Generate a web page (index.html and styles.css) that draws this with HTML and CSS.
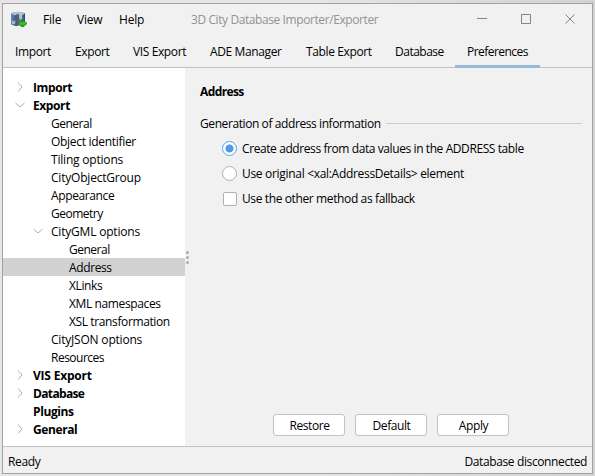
FILE: index.html
```html
<!DOCTYPE html>
<html lang="en">
<head>
<meta charset="utf-8">
<title>3D City Database Importer/Exporter</title>
<link rel="stylesheet" href="styles.css">
</head>
<body>
<div class="window">
  <header class="titlebar">
    <svg class="app-icon" width="17" height="17" viewBox="0 0 17 17">
      <defs><linearGradient id="drum"><stop offset="0" stop-color="#6f89ae"/><stop offset=".25" stop-color="#4a6a96"/><stop offset=".55" stop-color="#9fb0c8"/><stop offset="1" stop-color="#1d4476"/></linearGradient></defs>
      <path d="M0 2.200Q7-.8 14 2.200V13.500Q7 16.500 0 13.500Z" fill="url(#drum)"/>
      <ellipse cx="7" cy="2.500" rx="6.500" ry="1.700" fill="#b3c0d2"/>
      <path d="M4 5l2-2h2v4l1 3-2 5H4l1-5-1-2z" fill="#4b5563" opacity=".85"/>
      <path d="M8 3h3v5H9zM1 10h3v3H1z" fill="#c3ccda" opacity=".8"/>
      <path d="M7.500 12.500L11 9v2h1V9l4 3.500L12 16v-2h-1v2z" fill="#35c51f" stroke="#16850f" stroke-width=".9"/>
    </svg>
    <nav class="menu"><span class="m-file">File</span><span class="m-view">View</span><span class="m-help">Help</span></nav>
    <h1 class="title">3D City Database Importer/Exporter</h1>
    <svg class="controls" width="98" height="11" viewBox="0 0 98 11" fill="none" stroke="#858585">
      <path d="M0 4.500h10M44.500.5h9v9h-9zM88.500.5l9 9M97.500.5l-9 9"/>
    </svg>
  </header>
  <nav class="tabs">
    <span class="tab t-import">Import</span>
    <span class="tab t-export">Export</span>
    <span class="tab t-vis">VIS Export</span>
    <span class="tab t-ade">ADE Manager</span>
    <span class="tab t-table">Table Export</span>
    <span class="tab t-db">Database</span>
    <span class="tab t-pref active">Preferences</span>
  </nav>
  <main class="content">
    <ul class="tree">
      <li class="top"><svg class="arrow" viewBox="0 0 10 10"><path d="M3 .5L7 5L3 9.500"/></svg><span>Import</span></li>
      <li class="top"><svg class="arrow" viewBox="0 0 10 10"><path d="M.5 3L5 7L9.500 3"/></svg><span>Export</span></li>
      <li class="sub tight"><span>General</span></li>
      <li class="sub mid"><span>Object identifier</span></li>
      <li class="sub loose"><span>Tiling options</span></li>
      <li class="sub loose"><span>CityObjectGroup</span></li>
      <li class="sub"><span>Appearance</span></li>
      <li class="sub tight"><span>Geometry</span></li>
      <li class="sub loose"><svg class="arrow" viewBox="0 0 10 10"><path d="M.5 3L5 7L9.500 3"/></svg><span>CityGML options</span></li>
      <li class="leaf tight"><span>General</span></li>
      <li class="leaf selected"><span>Address</span></li>
      <li class="leaf"><span>XLinks</span></li>
      <li class="leaf"><span>XML namespaces</span></li>
      <li class="leaf"><span>XSL transformation</span></li>
      <li class="sub loose"><span>CityJSON options</span></li>
      <li class="sub tight"><span>Resources</span></li>
      <li class="top wide"><svg class="arrow" viewBox="0 0 10 10"><path d="M3 .5L7 5L3 9.500"/></svg><span>VIS Export</span></li>
      <li class="top narrow"><svg class="arrow" viewBox="0 0 10 10"><path d="M3 .5L7 5L3 9.500"/></svg><span>Database</span></li>
      <li class="top"><span>Plugins</span></li>
      <li class="top"><svg class="arrow" viewBox="0 0 10 10"><path d="M3 .5L7 5L3 9.500"/></svg><span>General</span></li>
    </ul>
    <div class="divider"><i></i><i></i><i></i></div>
    <section class="panel">
      <h2>Address</h2>
      <div class="group"><span>Generation of address information</span></div>
      <div class="option"><span class="radio checked"></span><span class="o-create">Create address from data values in the ADDRESS table</span></div>
      <div class="option"><span class="radio"></span><span class="o-orig">Use original &lt;xal:AddressDetails&gt; element</span></div>
      <div class="option"><span class="check"></span><span>Use the other method as fallback</span></div>
      <div class="buttons"><button>Restore</button><button>Default</button><button>Apply</button></div>
    </section>
  </main>
  <footer class="status"><span>Ready</span><span>Database disconnected</span></footer>
</div>
</body>
</html>
```
FILE: styles.css
```css
* { box-sizing: border-box; margin: 0; padding: 0; }
body {
  width: 595px; height: 476px; overflow: hidden;
  padding: 3px 2px 2px 2px;
  background: linear-gradient(90deg, #e6e6e6 0, #e6e6e6 300px, #d2d2d2 595px);
  font: 12px/18px "Open Sans", "Noto Sans", sans-serif;
  letter-spacing: -0.38px; color: #000; white-space: nowrap;
}
.window {
  width: 591px; height: 471px; display: flex; flex-direction: column;
  background: #f1f1f1; border: 1px solid #a2a2a2;
}
.titlebar { height: 32px; display: flex; align-items: center; padding-left: 8px; }
.app-icon { flex: none; margin-top: -1px; }
.menu { display: flex; width: 147px; padding-left: 15px; letter-spacing: -0.2px; }
.m-file { width: 34px; }
.m-view { width: 42px; }
.title { flex: 1; font-size: 12px; font-weight: 400; color: #929292; padding-left: 16px; letter-spacing: -0.41px; }
.controls { flex: none; margin-right: 17px; margin-top: -1px; }
.tabs { height: 32px; display: flex; border-bottom: 1px solid #c2c2c2; }
.tab { height: 32px; line-height: 32px; padding-left: 12px; }
.t-import { width: 60px; }
.t-export { width: 58px; }
.t-vis { width: 77px; }
.t-ade { width: 96px; }
.t-table { width: 89px; }
.t-db { width: 72px; letter-spacing: -0.5px; }
.t-pref { width: 85px; letter-spacing: -0.55px; }
.active { border-bottom: 3px solid #98b9dc; }
.content { height: 378px; display: flex; }
.tree { width: 182px; padding-top: 10px; background: #fff; list-style: none; }
.tree li { height: 18px; display: flex; align-items: center; }
.tree span { padding-top: 2px; }
.top { padding-left: 30px; font-weight: 700; letter-spacing: -0.4px; }
.sub { padding-left: 48px; }
.leaf { padding-left: 66px; }
.tree .tight { letter-spacing: -0.5px; }
.tree .mid { letter-spacing: -0.3px; }
.tree .loose { letter-spacing: -0.2px; }
.tree .wide { letter-spacing: -0.2px; }
.tree .narrow { letter-spacing: -0.65px; }
.selected { background: #d2d2d2; }
.arrow { width: 10px; height: 10px; margin-left: -18px; margin-right: 8px; fill: none; stroke: #aeaeae; }
.divider { width: 5px; display: flex; flex-direction: column; align-items: center; justify-content: center; gap: 2px; }
.divider i { width: 3px; height: 3px; border-radius: 50%; background: #adadad; }
.panel { flex: 1; padding: 15px 10px 0 10px; }
h2 { font-size: 12px; line-height: 18px; letter-spacing: -0.6px; }
.group { display: flex; align-items: center; gap: 5px; margin: 14px 0 3px; letter-spacing: -0.41px; }
.group::after { content: ""; flex: 1; height: 1px; margin-top: -1px; background: #cdcdcd; }
.option { height: 25px; display: flex; align-items: center; gap: 5px; padding-left: 22px; }
.o-create { letter-spacing: -0.41px; }
.o-orig { letter-spacing: -0.31px; }
.radio { width: 15px; height: 15px; border: 1px solid #b0b0b0; border-radius: 50%; background: #fff; }
.checked { border-color: #5ba2e4; background: radial-gradient(circle, #4d9ce5 3.8px, #fff 4.3px); }
.check { width: 14px; height: 14px; margin-left: 1px; border: 1px solid #b0b0b0; border-radius: 2px; background: #fff; }
.buttons { display: flex; gap: 10px; padding-left: 73px; margin-top: 203px; }
button { width: 72px; height: 22px; padding: 2px 0 0 1px; border: 1px solid #c2c2c2; border-radius: 3px; background: #fff; color: #000; font: 12px/18px "Open Sans", sans-serif; letter-spacing: -0.4px; }
.status { flex: 1; display: flex; align-items: center; justify-content: space-between; padding: 3px 5px 0; border-top: 1px solid #c2c2c2; }
```
